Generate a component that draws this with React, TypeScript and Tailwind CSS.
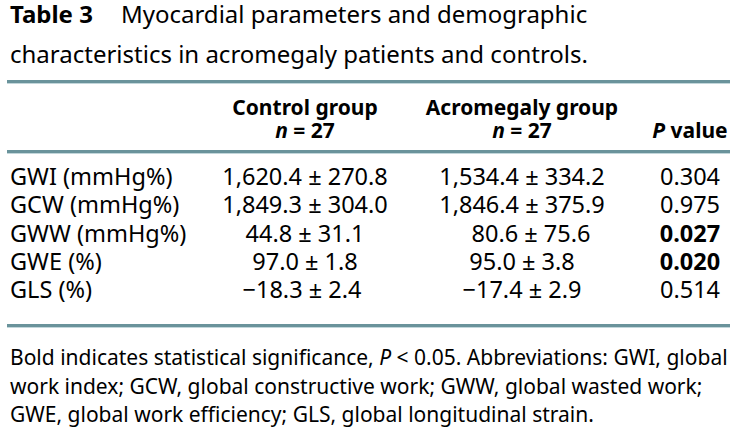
import React from "react";

const rows: { label: string; c: string; a: string; p: string; bold?: boolean; cx?: string; ax?: string }[] = [
  { label: "GWI (mmHg%)", c: "1,620.4 ± 270.8", a: "1,534.4 ± 334.2", p: "0.304" },
  { label: "GCW (mmHg%)", c: "1,849.3 ± 304.0", a: "1,846.4 ± 375.9", p: "0.975" },
  { label: "GWW (mmHg%)", c: "44.8 ± 31.1", a: "80.6 ± 75.6", p: "0.027", bold: true, ax: "pl-[18px]" },
  { label: "GWE (%)", c: "97.0 ± 1.8", a: "95.0 ± 3.8", p: "0.020", bold: true },
  { label: "GLS (%)", c: "\u221218.3 ± 2.4", a: "\u221217.4 ± 2.9", p: "0.514", cx: "pr-[6px]" },
];

function Rule() {
  return (
    <div className="ml-[7px] w-[723px]">
      <div className="h-[3px] bg-[#6a939b]" />
      <div className="h-[1px] bg-[#c3d7db]" />
    </div>
  );
}

export default function App() {
  return (
    <div
      className="w-[742px] h-[448px] overflow-hidden bg-white text-black"
      style={{ fontFamily: '"Noto Sans", "Open Sans", sans-serif' }}
    >
      <div className="pl-[10px] text-[24px] leading-[28px] whitespace-nowrap">
        <div>
          <span className="font-bold">Table 3</span>
          <span className="inline-block w-[28px]" />
          Myocardial parameters and demographic
        </div>
        <div className="mt-[12px]">characteristics in acromegaly patients and controls.</div>
      </div>
      <div className="mt-[12px]">
        <Rule />
      </div>
      <div className="grid grid-cols-[193px_210px_224px_112px] ml-[7px] pt-[12px] pb-[8px] text-[21px] leading-[23px] font-bold">
        <div />
        <div className="text-center whitespace-nowrap">
          Control group
          <br />
          <span className="italic">n</span> = 27
        </div>
        <div className="text-center whitespace-nowrap">
          Acromegaly group
          <br />
          <span className="italic">n</span> = 27
        </div>
        <div className="text-center self-end whitespace-nowrap">
          <span className="italic">P</span> value
        </div>
      </div>
      <Rule />
      <div className="ml-[7px] pt-[8px] pb-[21px] text-[23.5px] leading-[28.3px]">
        {rows.map((r) => (
          <div key={r.label} className="grid grid-cols-[193px_210px_224px_112px]">
            <div className="pl-[3px] whitespace-nowrap">{r.label}</div>
            <div className={"text-center whitespace-nowrap " + (r.cx ?? "")}>{r.c}</div>
            <div className={"text-center whitespace-nowrap " + (r.ax ?? "")}>{r.a}</div>
            <div className={"text-center whitespace-nowrap " + (r.bold ? "font-bold" : "")}>{r.p}</div>
          </div>
        ))}
      </div>
      <Rule />
      <div className="pl-[10px] pt-[15px] text-[21px] leading-[28.5px] whitespace-nowrap">
        Bold indicates statistical significance, <span className="italic">P</span> &lt; 0.05. Abbreviations: GWI, global
        <br />
        work index; GCW, global constructive work; GWW, global wasted work;
        <br />
        GWE, global work efficiency; GLS, global longitudinal strain.
      </div>
    </div>
  );
}
